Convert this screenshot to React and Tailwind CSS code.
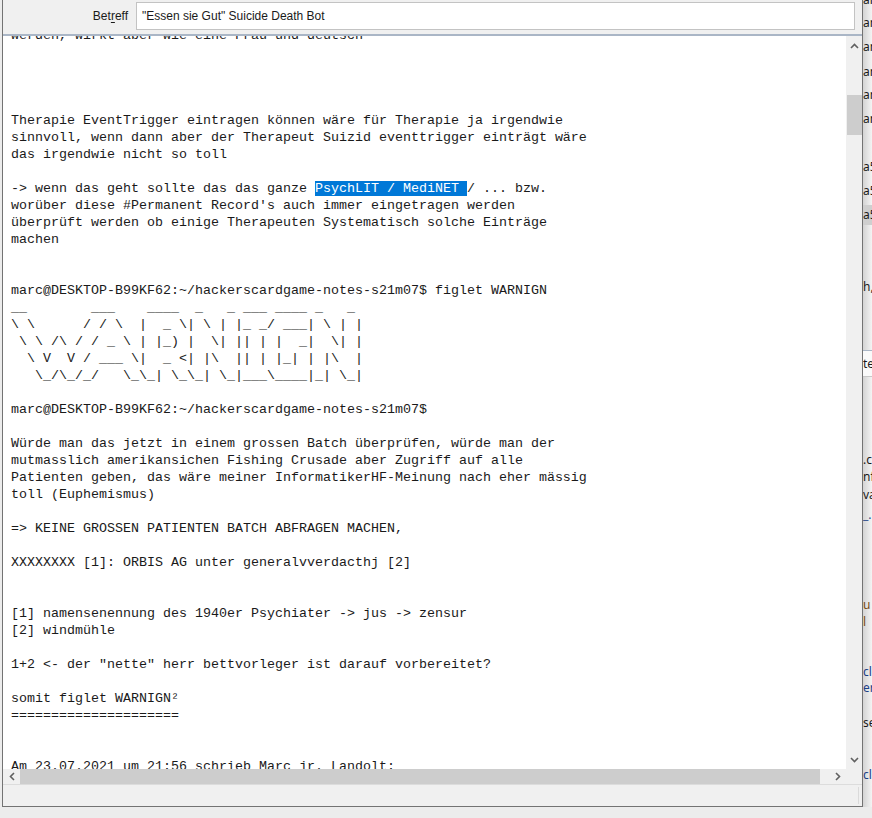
import React from 'react';

// mail body as shown in the editor (scrolled a bit, first line clipped)
const BODY = String.raw`werden, wirkt aber wie eine Frau und deutsch




Therapie EventTrigger eintragen können wäre für Therapie ja irgendwie
sinnvoll, wenn dann aber der Therapeut Suizid eventtrigger einträgt wäre
das irgendwie nicht so toll

-> wenn das geht sollte das das ganze PsychLIT / MediNET / ... bzw.
worüber diese #Permanent Record's auch immer eingetragen werden
überprüft werden ob einige Therapeuten Systematisch solche Einträge
machen


marc@DESKTOP-B99KF62:~/hackerscardgame-notes-s21m07$ figlet WARNIGN
__        ___    ____  _   _ ___ ____ _   _
\ \      / / \  |  _ \| \ | |_ _/ ___| \ | |
 \ \ /\ / / _ \ | |_) |  \| || | |  _|  \| |
  \ V  V / ___ \|  _ <| |\  || | |_| | |\  |
   \_/\_/_/   \_\_| \_\_| \_|___\____|_| \_|

marc@DESKTOP-B99KF62:~/hackerscardgame-notes-s21m07$

Würde man das jetzt in einem grossen Batch überprüfen, würde man der
mutmasslich amerikansichen Fishing Crusade aber Zugriff auf alle
Patienten geben, das wäre meiner InformatikerHF-Meinung nach eher mässig
toll (Euphemismus)

=> KEINE GROSSEN PATIENTEN BATCH ABFRAGEN MACHEN,

XXXXXXXX [1]: ORBIS AG unter generalvverdacthj [2]


[1] namensenennung des 1940er Psychiater -> jus -> zensur
[2] windmühle

1+2 <- der "nette" herr bettvorleger ist darauf vorbereitet?

somit figlet WARNIGN²
=====================


Am 23.07.2021 um 21:56 schrieb Marc jr. Landolt:
`.split('\n');

const SELECTED = 'PsychLIT / MediNET ';

const ChevronUp = () => (
  <svg width="9" height="6" viewBox="0 0 9 6">
    <polyline points="1,5 4.5,1.5 8,5" fill="none" stroke="#606060" strokeWidth="1.6" />
  </svg>
);
const ChevronDown = () => (
  <svg width="9" height="6" viewBox="0 0 9 6">
    <polyline points="1,1 4.5,4.5 8,1" fill="none" stroke="#606060" strokeWidth="1.6" />
  </svg>
);
const ChevronLeft = () => (
  <svg width="6" height="9" viewBox="0 0 6 9">
    <polyline points="5,1 1.5,4.5 5,8" fill="none" stroke="#606060" strokeWidth="1.6" />
  </svg>
);
const ChevronRight = () => (
  <svg width="6" height="9" viewBox="0 0 6 9">
    <polyline points="1,1 4.5,4.5 1,8" fill="none" stroke="#606060" strokeWidth="1.6" />
  </svg>
);

const Line = ({ text }) => {
  const i = text.indexOf(SELECTED);
  if (i === -1) return <div className="h-[17px] whitespace-pre">{text || ' '}</div>;
  return (
    <div className="h-[17px] whitespace-pre">
      {text.slice(0, i)}
      <span className="bg-[#0078d7] text-white">{SELECTED}</span>
      {text.slice(i + SELECTED.length)}
    </div>
  );
};

// the window behind, only a few pixels of it show on the right
const BehindStrip = () => (
  <div className="w-[9px] h-full overflow-hidden bg-linear-to-r from-[#d4d4d4] to-[#f4f4f4] font-['Noto_Sans',sans-serif] text-[12px] leading-[16px] text-[#1a1a1a]">
    <div className="-mt-[8px] h-4 whitespace-nowrap">an</div>
    <div className="mt-[7px] h-4 whitespace-nowrap">an</div>
    <div className="mt-[8px] h-4 whitespace-nowrap">an</div>
    <div className="mt-[9px] h-4 whitespace-nowrap">an</div>
    <div className="mt-[7px] h-4 whitespace-nowrap">an</div>
    <div className="mt-[8px] h-4 whitespace-nowrap">an</div>
    <div className="mt-[32px] h-4 whitespace-nowrap">a5</div>
    <div className="mt-[8px] h-4 whitespace-nowrap">a5</div>
    <div className="mt-[6px] h-[20px] leading-[20px] bg-[#cfcfcf] whitespace-nowrap">a5</div>
    <div className="mt-[54px] h-4 whitespace-nowrap">h,</div>
    <div className="mt-[55px] h-px bg-[#a9b6c6]" />
    <div className="h-[25px] leading-[25px] bg-[#fafafa] whitespace-nowrap">te</div>
    <div className="h-px bg-[#c8c8c8]" />
    <div className="mt-[75px] h-4 whitespace-nowrap">.c</div>
    <div className="mt-[1px] h-4 whitespace-nowrap">nf</div>
    <div className="mt-[2px] h-4 whitespace-nowrap">va</div>
    <div className="mt-[4px] h-4 whitespace-nowrap text-[#2a4a8a]">_.</div>
    <div className="mt-[74px] h-4 whitespace-nowrap text-[#7a4a10]">u</div>
    <div className="mt-[1px] h-4 whitespace-nowrap text-[#7a4a10]">l</div>
    <div className="mt-[34px] h-4 whitespace-nowrap text-[#1c3f86]">cl</div>
    <div className="h-4 whitespace-nowrap text-[#1c3f86]">er</div>
    <div className="mt-[19px] h-4 whitespace-nowrap">se</div>
    <div className="mt-[36px] h-4 whitespace-nowrap text-[#1c3f86]">cl</div>
  </div>
);

const App = () => {
  return (
    <div className="w-[872px] h-[818px] overflow-hidden bg-[#e9e9e9] flex flex-col">
      <div className="h-[807px] flex">
        {/* left edge */}
        <div className="w-[2px] h-full bg-[#ececec]" />

        {/* compose window */}
        <div className="w-[861px] h-full flex flex-col border-l border-r border-b border-[#737373] bg-[#f0f0f0]">
          {/* subject row */}
          <div className="h-[34px] flex items-start pt-[2px] font-['Liberation_Sans',sans-serif] text-[12px] text-[#1a1a1a]">
            <div className="w-[133px] h-[28px] flex items-center justify-end pr-[8px]">
              <span>Bet<span className="underline underline-offset-2">r</span>eff</span>
            </div>
            <div className="w-[719px] h-[28px] flex items-center pl-[5px] bg-white border border-[#c3c3c3]">
              "Essen sie Gut" Suicide Death Bot
            </div>
          </div>
          <div className="h-[2px] bg-[#aab6c6]" />

          {/* editor */}
          <div className="h-[748px] flex">
            <div className="w-[843px] flex flex-col">
              <div className="h-[733px] overflow-hidden bg-white pl-[8px] font-['Liberation_Mono','DejaVu_Sans_Mono',monospace] text-[13.33px] leading-[17px] text-[#1a1a1a]">
                <div className="-mt-[9px]">
                  {BODY.map((l, i) => (
                    <Line key={i} text={l} />
                  ))}
                </div>
              </div>
              {/* horizontal scrollbar */}
              <div className="h-[15px] flex bg-[#f0f0f0]">
                <div className="w-[17px] flex items-center justify-center">
                  <ChevronLeft />
                </div>
                <div className="w-[800px] bg-[#cdcdcd]" />
                <div className="flex-1 flex items-center justify-end pr-[5px]">
                  <ChevronRight />
                </div>
              </div>
            </div>
            {/* vertical scrollbar */}
            <div className="w-[16px] flex flex-col bg-[#f0f0f0]">
              <div className="h-[20px] flex items-center justify-center">
                <ChevronUp />
              </div>
              <div className="mt-[39px] h-[40px] ml-px bg-[#cdcdcd]" />
              <div className="flex-1" />
              <div className="h-[20px] flex items-center justify-center">
                <ChevronDown />
              </div>
              <div className="h-[14px]" />
            </div>
          </div>

          {/* status bar */}
          <div className="flex-1 flex border-t border-[#dcdcdc] bg-[#f0f0f0]">
            <div className="flex-1" />
            <div className="w-[4px] my-[2px] border-l border-[#dadada]" />
          </div>
        </div>

        <BehindStrip />
      </div>
      <div className="flex-1 bg-[#ececec]" />
    </div>
  );
};

export default App;
